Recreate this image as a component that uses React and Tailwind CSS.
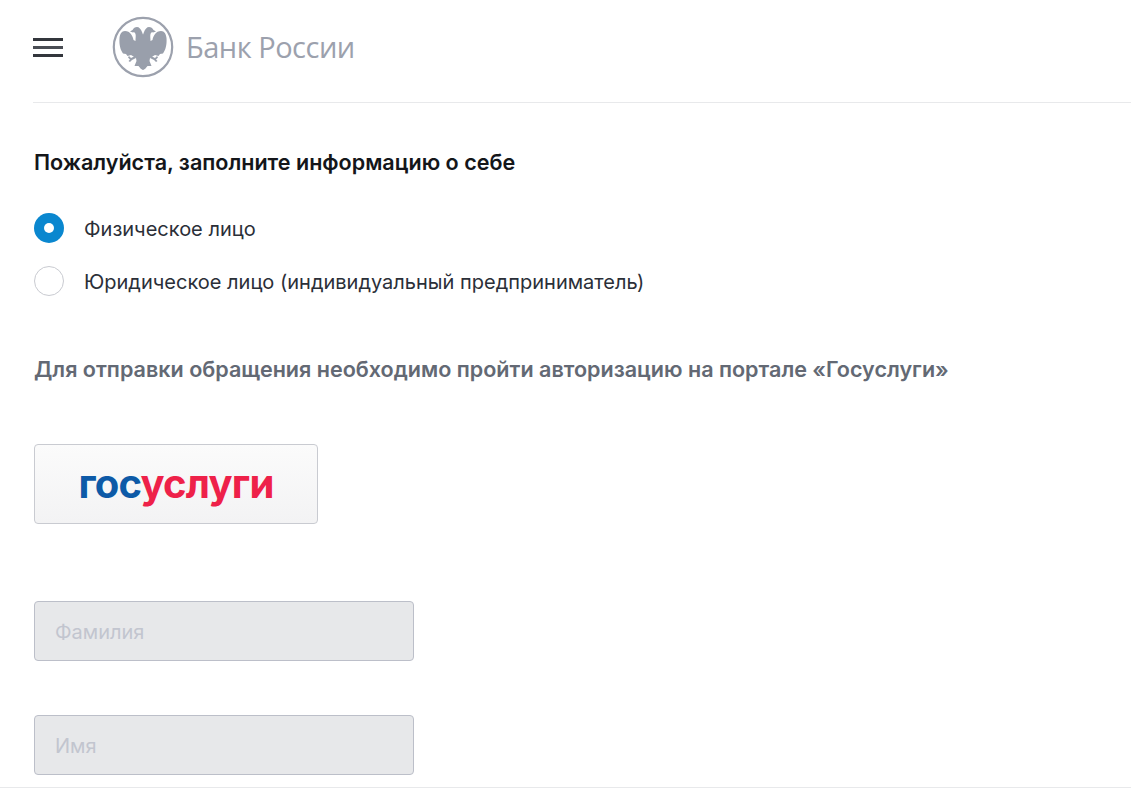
function EagleHalf() {
  return (
    <>
      <path d="M31.5 20L30 16C29 13 27 11 25 11C23 11 21.5 12 20.5 14L18 15.5L21 16.5C22 16 23 16.5 23.5 18C24 20 23.5 22 23.5 25L21.5 24C21 20 18 15 13 15C9.5 15 8 18 7.5 22C7 29 8.5 34 11 37.5L14 38L15.5 40L19 39L21.5 40.5L24 42L24.5 45L22.5 50L26.5 50L29 53L31.5 54Z" />
      <path d="M23 40L19 42L17 40L16 41.5L18 43.5L16.5 45L18 46L20 44L24 42Z" />
    </>
  );
}

function BankLogo() {
  return (
    <svg width="62" height="62" viewBox="0 0 62 62" fill="none" className="shrink-0">
      <circle cx="31" cy="31" r="29.2" stroke="#9ca1ad" strokeWidth="2.2" />
      <g fill="#999fab">
        <EagleHalf />
        <g transform="translate(62 0) scale(-1 1)">
          <EagleHalf />
        </g>
      </g>
    </svg>
  );
}

function Radio({ checked, label }) {
  return (
    <label className="flex items-center gap-5 h-[30px]">
      {checked ? (
        <span className="flex items-center justify-center w-[30px] h-[30px] rounded-full bg-[#0a87cf]">
          <span className="w-[10px] h-[10px] rounded-full bg-white" />
        </span>
      ) : (
        <span className="w-[30px] h-[30px] rounded-full border border-[#c9cbd1] bg-white" />
      )}
      <span className="pt-[2px] text-[20px] leading-[30px] text-[#2b2f38]">{label}</span>
    </label>
  );
}

function DisabledInput({ placeholder }) {
  return (
    <div className="flex items-center w-[380px] h-[60px] pl-5 pt-[2px] rounded border border-[#bcbfc9] bg-[#e7e8ea] text-[20px] text-[#c2c5cf]">
      {placeholder}
    </div>
  );
}

export default function App() {
  return (
    <div className="h-[812px] overflow-hidden bg-white font-['Inter',sans-serif]">
      <div className="h-[788px] overflow-hidden border-b border-[#e8e9eb]">
        <div className="pl-[33px]">
          {/* HEADER */}
          <header className="flex items-center h-[103px] pb-[8px] border-b border-[#e8e9eb]">
            <button className="flex flex-col w-[30px] gap-[5px]">
              <span className="block h-[3px] bg-[#33363c]" />
              <span className="block h-[3px] bg-[#4a4d54]" />
              <span className="block h-[3px] bg-[#33363c]" />
            </button>
            <div className="flex items-center ml-[49px] gap-[12px]">
              <BankLogo />
              <span className="font-['Open_Sans',sans-serif] text-[29px] leading-none tracking-[-0.5px] text-[#9ca1ad] mb-[2px]">
                Банк России
              </span>
            </div>
          </header>

          {/* FORM */}
          <div className="pl-px">
            <h1 className="mt-[45px] text-[21.55px] leading-[28px] font-semibold text-[#14161a]">
              Пожалуйста, заполните информацию о себе
            </h1>

            <div className="flex flex-col gap-[23px] mt-[37px]">
              <Radio checked label="Физическое лицо" />
              <Radio label="Юридическое лицо (индивидуальный предприниматель)" />
            </div>

            <p className="mt-[59px] text-[21.55px] leading-[28px] font-semibold text-[#636974]">
              Для отправки обращения необходимо пройти авторизацию на портале «Госуслуги»
            </p>

            <button className="flex items-center justify-center w-[284px] h-[80px] mt-[61px] rounded border border-[#c9cbd1] bg-gradient-to-b from-[#fbfbfb] to-[#f3f3f4]">
              <span className="text-[40px] leading-none font-bold tracking-[-0.8px] text-[#0d5aa7]">
                гос<span className="text-[#ee2149]">услуги</span>
              </span>
            </button>

            <div className="flex flex-col gap-[54px] mt-[77px]">
              <DisabledInput placeholder="Фамилия" />
              <DisabledInput placeholder="Имя" />
            </div>
          </div>
        </div>
      </div>
    </div>
  );
}
